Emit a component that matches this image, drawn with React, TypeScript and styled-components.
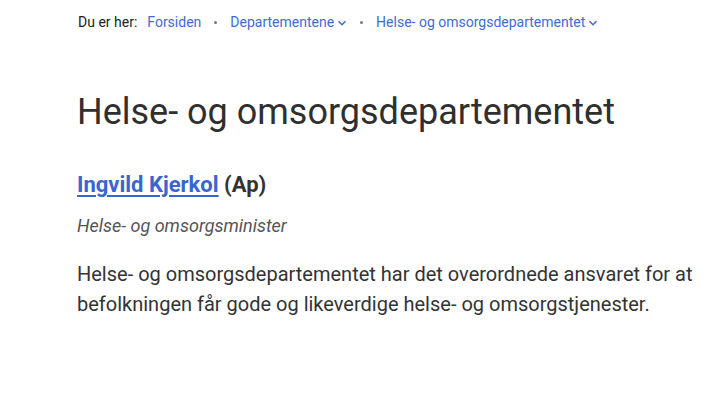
import React from 'react';
import styled, { createGlobalStyle } from 'styled-components';

const GlobalStyle = createGlobalStyle`
  body {
    margin: 0;
    background: #fff;
    font-family: Roboto, "Liberation Sans", sans-serif;
    color: #303030;
  }
`;

const crumbs = [
  { label: 'Forsiden', menu: false },
  { label: 'Departementene', menu: true },
  { label: 'Helse- og omsorgsdepartementet', menu: true },
];

const Chevron: React.FC = () => (
  <svg width="10" height="10" viewBox="0 0 10 10" aria-hidden="true">
    <path d="M1.5 3.2 L5 6.7 L8.5 3.2" fill="none" stroke="currentColor" strokeWidth="1.6" />
  </svg>
);

const App: React.FC = () => {
  return (
    <>
      <GlobalStyle />
      <Page>
        <Breadcrumbs>
          <Here>Du er her:</Here>
          {crumbs.map((c, i) => (
            <React.Fragment key={c.label}>
              {i > 0 && <Dot />}
              <Crumb href="#">
                {c.label}
                {c.menu && <Chevron />}
              </Crumb>
            </React.Fragment>
          ))}
        </Breadcrumbs>

        <Title>Helse- og omsorgsdepartementet</Title>

        <Minister>
          <MinisterLink href="#">Ingvild Kjerkol</MinisterLink> (Ap)
        </Minister>
        <Role>Helse- og omsorgsminister</Role>

        <Lead>
          Helse- og omsorgsdepartementet har det overordnede ansvaret for at
          befolkningen får gode og likeverdige helse- og omsorgstjenester.
        </Lead>
      </Page>
    </>
  );
};

const Page = styled.main`
  padding: 12px 0 0 77px;
  max-width: 630px;
`;

const Breadcrumbs = styled.nav`
  display: flex;
  align-items: center;
  font-size: 14px;
  height: 20px;
  padding-left: 1px;
`;

const Here = styled.span`
  color: #222;
  margin-right: 10px;
`;

const Dot = styled.span`
  width: 3px;
  height: 3px;
  border-radius: 50%;
  background: #777;
  margin: 0 13px;
`;

const Crumb = styled.a`
  display: inline-flex;
  align-items: center;
  gap: 3px;
  color: #3f6bd3;
  text-decoration: none;

  svg {
    margin-top: 2px;
  }
`;

const Title = styled.h1`
  font-size: 36px;
  font-weight: 400;
  color: #2f2f2f;
  margin: 58px 0 0;
  line-height: 44px;
`;

const Minister = styled.h2`
  font-size: 22px;
  font-weight: 700;
  color: #333;
  margin: 37px 0 0;
  line-height: 28px;
`;

const MinisterLink = styled.a`
  color: #3a65cf;
  text-decoration: underline;
  text-underline-offset: 3px;
  text-decoration-thickness: 2px;
`;

const Role = styled.p`
  font-style: italic;
  font-size: 18px;
  color: #555;
  margin: 14px 0 0;
  line-height: 26px;
`;

const Lead = styled.p`
  font-size: 20px;
  color: #333;
  line-height: 30px;
  margin: 20px 0 0;
`;

export default App;
